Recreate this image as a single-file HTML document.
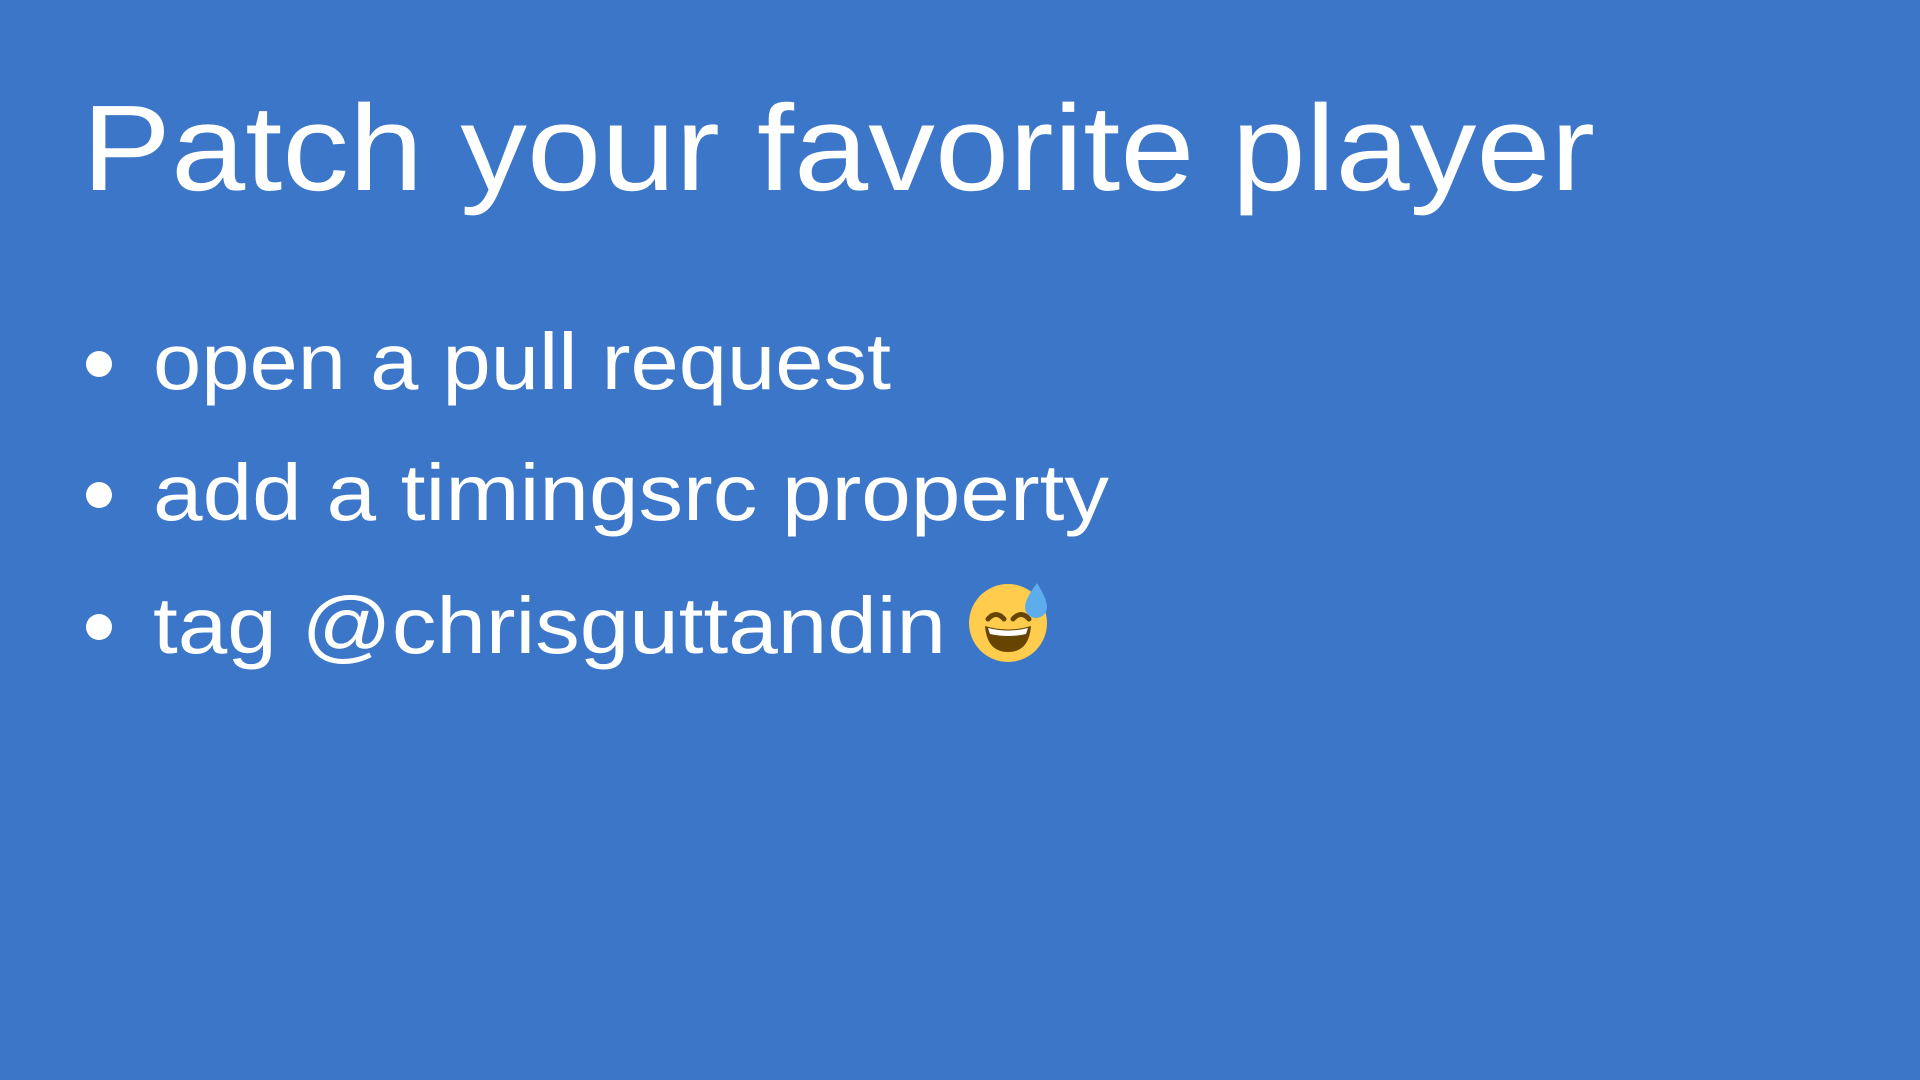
<!DOCTYPE html>
<html><head><meta charset="utf-8"><style>
html,body{margin:0;padding:0;background:#3c76c8;width:1920px;height:1080px;overflow:hidden}
svg{display:block}
</style></head><body>
<svg width="1920" height="1080" viewBox="0 0 1920 1080" xmlns="http://www.w3.org/2000/svg">
<rect width="1920" height="1080" fill="#3c76c8"/>
<g fill="#fff" font-family="Liberation Sans, sans-serif">
<text x="82" y="190" font-size="122" textLength="1513" lengthAdjust="spacingAndGlyphs">Patch your favorite player</text>
<circle cx="99" cy="364" r="13"/>
<circle cx="99" cy="495" r="13"/>
<circle cx="99" cy="627" r="13"/>
<text x="153" y="389" font-size="80" textLength="738" lengthAdjust="spacingAndGlyphs">open a pull request</text>
<text x="153" y="520" font-size="80" textLength="956" lengthAdjust="spacingAndGlyphs">add a timingsrc property</text>
<text x="153" y="653" font-size="80" textLength="793" lengthAdjust="spacingAndGlyphs">tag @chrisguttandin</text>
</g>
<circle cx="1008" cy="623" r="39" fill="#ffcc4d"/>
<path d="M988 619 q8-9 16 0 M1013 619 q8-9 16 0" stroke="#664500" stroke-width="5" fill="none" stroke-linecap="round"/>
<path d="M985 626 q23 7 46 0 q-2 26 -23 26 q-21 0 -23 -26z" fill="#664500"/>
<path d="M988 628 q20 5 40 0 l-2 6 q-18 4 -36 0z" fill="#fff"/>
<path d="M1037 583 q-12 16 -12 24 a11 11 0 0 0 22 0 q0 -8 -10 -24z" fill="#5dadec"/>
</svg>
</body></html>
